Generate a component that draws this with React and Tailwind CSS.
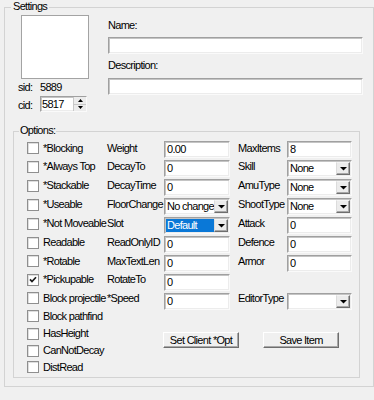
import React from "react";

const sunken =
  "bg-white border border-t-[#a0a0a0] border-l-[#a0a0a0] border-r-[#fafafa] border-b-[#fafafa] shadow-[inset_1px_1px_0_#c4c4c4,inset_-1px_-1px_0_#ececec]";

const H = { 16: "h-[16px]", 17: "h-[17px]", 18: "h-[18px]", 19: "h-[19px]" };
const rowH = [18, 19, 19, 19, 19, 19, 18, 19, 18, 18, 17, 17, 16];

function Tri({ up }) {
  return (
    <svg width="7" height="4" viewBox="0 0 7 4" className="block">
      {up ? <polygon points="0,4 7,4 3.5,0.5" fill="#000" /> : <polygon points="0,0 7,0 3.5,3.5" fill="#000" />}
    </svg>
  );
}

function DropBtn() {
  return (
    <div className="w-[14px] h-[13px] shrink-0 bg-[#ececec] border border-t-[#f4f4f4] border-l-[#dcdcdc] border-r-[#6e6e6e] border-b-[#6e6e6e] shadow-[inset_-1px_-1px_0_#a8a8a8] flex items-center justify-center">
      <Tri />
    </div>
  );
}

function TextBox({ value, className = "" }) {
  return (
    <div className={`${sunken} h-[17px] flex items-center pl-[2px] overflow-hidden whitespace-nowrap ${className}`}>
      {value}
    </div>
  );
}

function Combo({ value, selected }) {
  return (
    <div className={`${sunken} h-[17px] flex items-center pl-[1px] pr-[1px]`}>
      <div className="flex-1 min-w-0 h-[13px] overflow-hidden whitespace-nowrap flex items-center">
        {selected ? (
          <span className="w-full h-[13px] bg-[#0a78d7] text-white pl-[1px] flex items-center">{value}</span>
        ) : (
          <span className="pl-[1px]">{value}</span>
        )}
      </div>
      <DropBtn />
    </div>
  );
}

function Check({ checked }) {
  return (
    <div className="w-[12px] h-[12px] shrink-0 border border-[#8f8f8f] bg-white shadow-[inset_1px_1px_0_#dedede] flex items-center justify-center">
      {checked && (
        <svg width="8" height="7" viewBox="0 0 8 7" className="block">
          <path d="M1 3.4 L3 5.6 L7 1.2" stroke="#1a1a1a" strokeWidth="1.7" fill="none" />
        </svg>
      )}
    </div>
  );
}

function Button({ children }) {
  return (
    <div className="w-[76px] h-[16px] bg-[#f0f0f0] border border-t-white border-l-white border-r-[#6e6e6e] border-b-[#6e6e6e] shadow-[inset_-1px_-1px_0_#a8a8a8] flex items-center justify-center whitespace-nowrap">
      {children}
    </div>
  );
}

const checks = [
  "*Blocking",
  "*Always Top",
  "*Stackable",
  "*Useable",
  "*Not Moveable",
  "Readable",
  "*Rotable",
  "*Pickupable",
  "Block projectile",
  "Block pathfind",
  "HasHeight",
  "CanNotDecay",
  "DistRead",
];

const midLabels = ["Weight", "DecayTo", "DecayTime", "FloorChange", "Slot", "ReadOnlyID", "MaxTextLen", "RotateTo", "*Speed"];
const rightLabels = ["MaxItems", "Skill", "AmuType", "ShootType", "Attack", "Defence", "Armor", "", "EditorType"];

export default function App() {
  return (
    <div className="w-[374px] h-[400px] overflow-hidden bg-[#f0f0f0] text-black font-['Liberation_Sans',Arial,sans-serif] text-[11px] leading-[13px] tracking-[-0.7px] pt-[7px] pl-[4px]">
      <div className="relative w-[370px] h-[380px] border border-[#d3d3d3]">
        <span className="absolute left-[6px] top-[-8px] px-[2px] bg-[#f0f0f0]">Settings</span>

        {/* top section */}
        <div className="flex h-[123px]">
          <div className="w-[103px] pl-[13px] flex flex-col">
            <div className="ml-[3px] mt-[7px] w-[68px] h-[64px] bg-white border border-[#a3a3a3]" />
            <div className="mt-[2px] h-[13px] flex">
              <span className="w-[22px]">sid:</span>
              <span>5889</span>
            </div>
            <div className="mt-[2px] flex items-start">
              <span className="w-[22px] mt-[3px]">cid:</span>
              <div className={`${sunken} w-[47px] h-[16px] flex`}>
                <div className="flex-1 flex items-center pl-[1px]">5817</div>
                <div className="w-[13px] flex flex-col">
                  <div className="flex-1 bg-[#ececec] border-l border-b border-[#c8c8c8] flex items-center justify-center">
                    <svg width="5" height="3" viewBox="0 0 5 3" className="block">
                      <polygon points="0,3 5,3 2.5,0" fill="#000" />
                    </svg>
                  </div>
                  <div className="flex-1 bg-[#ececec] border-l border-[#c8c8c8] flex items-center justify-center">
                    <svg width="5" height="3" viewBox="0 0 5 3" className="block">
                      <polygon points="0,0 5,0 2.5,3" fill="#000" />
                    </svg>
                  </div>
                </div>
              </div>
            </div>
          </div>
          <div className="w-[255px] flex flex-col">
            <span className="mt-[11px] h-[13px]">Name:</span>
            <TextBox value="" className="mt-[5px]" />
            <span className="mt-[5px] h-[13px]">Description:</span>
            <TextBox value="" className="mt-[6px]" />
          </div>
        </div>

        {/* options */}
        <div className="relative ml-[8px] w-[347px] h-[247px] border border-[#d3d3d3]">
          <span className="absolute left-[5px] top-[-8px] px-[1px] bg-[#f0f0f0]">Options:</span>
          <div className="flex pt-[7px] pl-[13px]">
            <div className="w-[80px] flex flex-col">
              {checks.map((c, i) => (
                <div key={c} className={`${H[rowH[i]]} flex items-center whitespace-nowrap`}>
                  <Check checked={c === "*Pickupable"} />
                  <span className="ml-[4px]">{c}</span>
                </div>
              ))}
            </div>
            <div className="flex flex-col">
              <div className="flex">
                <div className="w-[57px] flex flex-col">
                  {midLabels.map((l, i) => (
                    <div key={l} className={`${H[rowH[i]]} flex items-center whitespace-nowrap`}>
                      {l}
                    </div>
                  ))}
                </div>
                <div className="w-[66px] mt-[2px] flex flex-col gap-[2px]">
                  <TextBox value="0.00" />
                  <TextBox value="0" />
                  <TextBox value="0" />
                  <Combo value="No change" />
                  <Combo value="Default" selected />
                  <TextBox value="0" />
                  <TextBox value="0" />
                  <TextBox value="0" />
                  <TextBox value="0" />
                </div>
                <div className="ml-[8px] w-[49px] flex flex-col">
                  {rightLabels.map((l, i) => (
                    <div key={i} className={`${H[rowH[i]]} flex items-center whitespace-nowrap`}>
                      {l}
                    </div>
                  ))}
                </div>
                <div className="w-[65px] mt-[2px] flex flex-col gap-[2px]">
                  <TextBox value="8" />
                  <Combo value="None" />
                  <Combo value="None" />
                  <Combo value="None" />
                  <TextBox value="0" />
                  <TextBox value="0" />
                  <TextBox value="0" />
                  <div className="h-[17px]" />
                  <Combo value="" />
                </div>
              </div>
              <div className="flex mt-[22px] ml-[56px] gap-[24px]">
                <Button>Set Client *Opt</Button>
                <Button>Save Item</Button>
              </div>
            </div>
          </div>
        </div>
      </div>
    </div>
  );
}
